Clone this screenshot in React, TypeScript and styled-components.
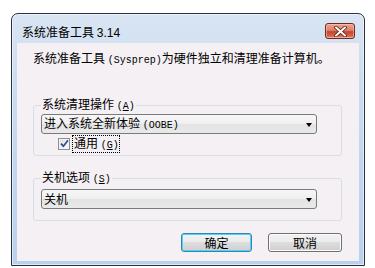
import styled, { createGlobalStyle } from "styled-components";

const GlobalStyle = createGlobalStyle`
  html, body {
    margin: 0;
    padding: 0;
    background: #ffffff;
  }
  body {
    font-family: "Noto Sans CJK SC", "Noto Sans", sans-serif;
    font-size: 12px;
    color: #000;
  }
`;

const Page = styled.div`
  width: 375px;
  height: 268px;
  padding: 13px 0 0 11px;
  box-sizing: border-box;
`;

const Window = styled.div`
  width: 354px;
  box-sizing: border-box;
  display: flex;
  flex-direction: column;
  padding: 0 5px 4px;
  border: 1px solid #27323e;
  border-radius: 7px 7px 0 0;
  background: linear-gradient(#d9e5f3 0%, #cfdef1 20%, #c1d6f0 60%, #bad1ee 100%);
  box-shadow: inset 0 0 0 1px rgba(255, 255, 255, 0.55);
`;

const TitleBar = styled.div`
  height: 29px;
  display: flex;
  align-items: flex-start;
  justify-content: space-between;
  padding: 9px 4px 0 5px;
  box-sizing: border-box;
`;

const Title = styled.div`
  margin-top: 2px;
  line-height: 14px;
  font-size: 12px;
  color: #000;
`;

const Latin = styled.span`
  font-family: "Liberation Sans", "Noto Sans", sans-serif;
`;

const CloseButton = styled.div`
  width: 30px;
  height: 16px;
  box-sizing: border-box;
  border: 1px solid #6f2b1f;
  border-radius: 3px;
  background: linear-gradient(#eba390 0%, #de8068 45%, #c8442a 55%, #d2624a 85%, #e3957c 100%);
  box-shadow: inset 0 0 0 1px rgba(255, 220, 210, 0.45);
  display: flex;
  align-items: center;
  justify-content: center;
`;

const Client = styled.div`
  background: #f4f0f4;
  padding: 7px 17px 9px 16px;
  display: flex;
  flex-direction: column;
`;

const Description = styled.div`
  line-height: 16px;
  white-space: nowrap;
`;

const Mono = styled.span`
  font-family: "Liberation Mono", monospace;
  font-size: 10px;
`;

const Group = styled.fieldset<{ $gap: number; $bottom: number }>`
  margin: ${(p) => p.$gap}px 0 0;
  padding: 0 24px ${(p) => p.$bottom}px 7px;
  border: 1px solid #d5dfe5;
  border-radius: 3px;
  min-width: 0;
  display: flex;
  flex-direction: column;
`;

const Legend = styled.legend`
  padding: 0 1px;
  line-height: 14px;
  font-size: 12px;
`;

const Key = styled.span`
  font-family: "Liberation Mono", monospace;
  font-size: 10px;
`;

const Under = styled.span`
  text-decoration: underline;
  text-underline-offset: 1px;
`;

const Combo = styled.div<{ $top: number }>`
  margin-top: ${(p) => p.$top}px;
  height: 20px;
  box-sizing: border-box;
  border: 1px solid #7a7a7a;
  border-radius: 3px;
  background: linear-gradient(#f7f7f7 0%, #efefef 50%, #e3e3e3 50%, #e9e9e9 100%);
  display: flex;
  align-items: center;
  justify-content: space-between;
  padding: 0 4px 0 2px;
  line-height: 16px;
  white-space: nowrap;
`;

const Arrow = styled.div`
  width: 0;
  height: 0;
  border-left: 3.5px solid transparent;
  border-right: 3.5px solid transparent;
  border-top: 4px solid #000;
  margin-top: 1px;
`;

const CheckRow = styled.div`
  margin: 2px 0 0 17px;
  height: 15px;
  display: flex;
  align-items: center;
  gap: 2px;
`;

const CheckBox = styled.div`
  width: 12px;
  height: 12px;
  box-sizing: border-box;
  border: 1px solid #8e8f8f;
  background: linear-gradient(135deg, #dcdcdc, #ffffff);
  box-shadow: inset 0 0 0 1px #f4f4f4;
  display: flex;
  align-items: center;
  justify-content: center;
`;

const CheckLabel = styled.div`
  outline: 1px dotted #000;
  outline-offset: -1px;
  padding: 0 1px 0 2px;
  line-height: 15px;
`;

const Buttons = styled.div`
  margin-top: 12px;
  display: flex;
  justify-content: flex-end;
  gap: 16px;
`;

const Button = styled.div<{ $w: number; $default?: boolean }>`
  width: ${(p) => p.$w}px;
  height: 19px;
  box-sizing: border-box;
  border: 1px solid ${(p) => (p.$default ? "#3c7fb1" : "#707070")};
  border-radius: 3px;
  background: linear-gradient(#f2f2f2 0%, #ebebeb 50%, #dddddd 50%, #cfcfcf 100%);
  box-shadow: inset 0 0 0 1px ${(p) => (p.$default ? "#48d7fb" : "#fcfcfc")};
  display: flex;
  align-items: center;
  justify-content: center;
  line-height: 15px;
`;

const App = () => {
  return (
    <Page>
      <GlobalStyle />
      <Window>
        <TitleBar>
          <Title>
            系统准备工具 <Latin>3.14</Latin>
          </Title>
          <CloseButton>
            <svg width="13" height="11" viewBox="0 0 13 11">
              <path
                d="M2 1.5 L11 9.5 M11 1.5 L2 9.5"
                stroke="#5a1a12"
                strokeWidth="3.6"
                strokeLinecap="round"
              />
              <path
                d="M2 1.5 L11 9.5 M11 1.5 L2 9.5"
                stroke="#ffffff"
                strokeWidth="2"
                strokeLinecap="round"
              />
            </svg>
          </CloseButton>
        </TitleBar>
        <Client>
          <Description>
            系统准备工具 <Mono>(Sysprep)</Mono>为硬件独立和清理准备计算机。
          </Description>
          <Group $gap={28} $bottom={4}>
            <Legend>
              系统清理操作 <Key>(<Under>A</Under>)</Key>
            </Legend>
            <Combo $top={0}>
              <span>
                进入系统全新体验 <Key>(OOBE)</Key>
              </span>
              <Arrow />
            </Combo>
            <CheckRow>
              <CheckBox>
                <svg width="9" height="9" viewBox="0 0 9 9">
                  <path
                    d="M1 4.6 L3.4 7.2 L8 1.2"
                    fill="none"
                    stroke="#2d4aa0"
                    strokeWidth="1.7"
                  />
                </svg>
              </CheckBox>
              <CheckLabel>
                通用 <Key>(<Under>G</Under>)</Key>
              </CheckLabel>
            </CheckRow>
          </Group>
          <Group $gap={14} $bottom={11}>
            <Legend>
              关机选项 <Key>(<Under>S</Under>)</Key>
            </Legend>
            <Combo $top={2}>
              <span>关机</span>
              <Arrow />
            </Combo>
          </Group>
          <Buttons>
            <Button $w={71} $default>
              确定
            </Button>
            <Button $w={74}>取消</Button>
          </Buttons>
        </Client>
      </Window>
    </Page>
  );
};

export default App;
